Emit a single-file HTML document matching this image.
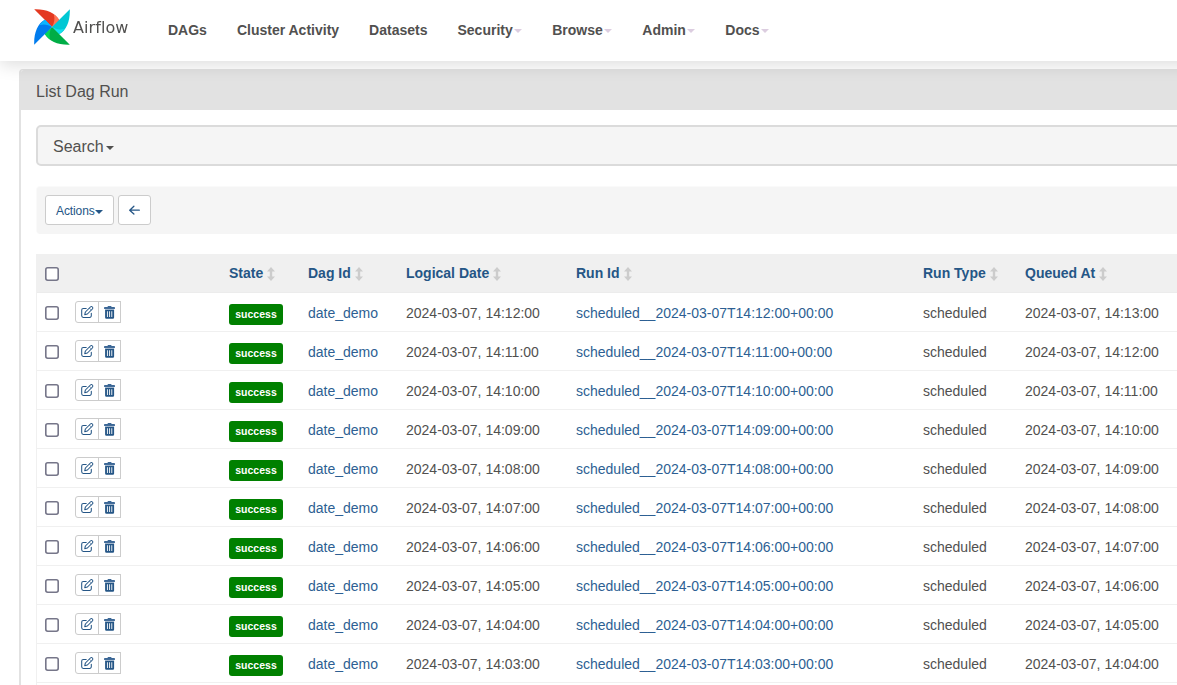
<!DOCTYPE html>
<html lang="en">
<head>
<meta charset="utf-8">
<title>List Dag Run - Airflow</title>
<style>
*{box-sizing:border-box}
html,body{margin:0;padding:0}
body{font-family:"Liberation Sans",Arial,sans-serif;font-size:14px;line-height:20px;color:#51504f;background:#fff;width:1177px;height:685px;overflow:hidden;position:relative}
a{color:#337ab7;text-decoration:none}
.navbar{position:absolute;left:0;top:0;width:1500px;height:61px;background:#fff;box-shadow:0 4px 16px rgba(0,0,0,.135);z-index:10}
.brand{position:absolute;left:34px;top:9px;width:100px;height:36px}
.brand svg{position:absolute;left:0;top:0}
.brand span{position:absolute;left:38.7px;top:7px;letter-spacing:.08px;font-family:"DejaVu Sans","Liberation Sans",sans-serif;font-weight:normal;font-size:16px;line-height:24px;color:#51504f;will-change:transform}
.nav{position:absolute;left:153px;top:0;margin:0;padding:0;list-style:none;display:flex;height:60px}
.nav li{padding:20px 15px;font-weight:bold;font-size:14px;line-height:20px;color:#51504f;white-space:nowrap}
.caret{display:inline-block;width:0;height:0;margin-left:2px;vertical-align:middle;border-top:4px solid;border-right:4px solid transparent;border-left:4px solid transparent}
.nav .caret{color:#dccde0;margin-left:1.5px}
.panel{position:absolute;left:19px;top:69px;width:1401px;height:700px;border:1px solid #e2e2e2;border-left-width:2px;border-radius:4px;background:#fff}
.panel-heading{height:40px;background:#e2e2e2;padding:12px 15px 8px;border-radius:3px 3px 0 0}
.panel-title{margin:0;font-size:16px;font-weight:normal;line-height:20px;color:#51504f}
.search{position:absolute;left:15px;top:55px;width:1368px;height:41px;background:#f5f5f5;border:2px solid #dbdbdb;border-radius:5px;padding:10px 15px;font-size:16px;line-height:20px;color:#51504f}
.well{position:absolute;left:15px;top:116px;width:1368px;height:48px;background:#f5f5f5;border:1px solid #fafafa;border-bottom:0;border-radius:4px}
.btn{position:absolute;top:8px;height:30px;border:1px solid #ccc;border-radius:3px;background:#fff;color:#255686;font-size:12px;line-height:18px;padding:6px 10px 4px;letter-spacing:-.1px}
table{position:absolute;left:15px;top:184px;width:1368px;border-collapse:separate;border-spacing:0;font-size:14px;table-layout:fixed;border-left:1px solid #f0f0f0}
tr{height:39px}
th{background:#f0f0f0;text-align:left;padding:0 8px 0 7px;font-weight:bold;color:#255686;white-space:nowrap;vertical-align:middle;border-bottom:1px solid #ececec}
td{padding:2px 8px 0 7px;border-bottom:1px solid #f0f0f0;white-space:nowrap;vertical-align:middle;color:#51504f}
th:first-child,td:first-child{padding-left:8px}
td a{color:#2d5f93}
.cb{display:block;width:14px;height:14px;position:relative;left:0;top:0}
.cb svg{display:block}
.state{display:inline-block;background:#008000;color:#fff;font-size:10.5px;font-weight:bold;line-height:14px;height:21px;width:54px;text-align:center;padding:3px 0 4px;border-radius:3px;position:relative;top:1px}
.bg{display:flex;height:22px;position:relative;top:-1px}
.bg span{display:block;width:24px;height:22px;border:1px solid #ccc;background:#fff;position:relative}
.bg span:first-child{border-radius:3px 0 0 3px}
.bg span+span{margin-left:-1px;width:23px}
.sort{display:inline-block;vertical-align:middle;margin-left:4px;position:relative;top:0}
.sort svg{display:block}
</style>
</head>
<body>
<div class="navbar">
  <div class="brand">
    <svg width="36" height="36" viewBox="-18 -18 36 36"><g transform="rotate(0)"><path d="M-17.8-17.8C-6-18.2 3-14.4 6.9-7.6Q7.5-6.9 6.8-6.5L0 0Z" fill="#e43921"/><path d="M1.8-12.4C3.4-11.1 5.6-9.2 6.9-7.6Q7.5-6.9 6.8-6.5L0 0C2.2-3.6 3.2-8 1.8-12.4Z" fill="#ff7557"/></g><g transform="rotate(90)"><path d="M-17.8-17.8C-6-18.2 3-14.4 6.9-7.6Q7.5-6.9 6.8-6.5L0 0Z" fill="#00c7d4"/><path d="M1.8-12.4C3.4-11.1 5.6-9.2 6.9-7.6Q7.5-6.9 6.8-6.5L0 0C2.2-3.6 3.2-8 1.8-12.4Z" fill="#11e1ee"/></g><g transform="rotate(180)"><path d="M-17.8-17.8C-6-18.2 3-14.4 6.9-7.6Q7.5-6.9 6.8-6.5L0 0Z" fill="#00ad46"/><path d="M1.8-12.4C3.4-11.1 5.6-9.2 6.9-7.6Q7.5-6.9 6.8-6.5L0 0C2.2-3.6 3.2-8 1.8-12.4Z" fill="#04d659"/></g><g transform="rotate(270)"><path d="M-17.8-17.8C-6-18.2 3-14.4 6.9-7.6Q7.5-6.9 6.8-6.5L0 0Z" fill="#017cee"/><path d="M1.8-12.4C3.4-11.1 5.6-9.2 6.9-7.6Q7.5-6.9 6.8-6.5L0 0C2.2-3.6 3.2-8 1.8-12.4Z" fill="#0cb6ff"/></g></svg>
    <span>Airflow</span>
  </div>
  <ul class="nav">
    <li>DAGs</li>
    <li>Cluster Activity</li>
    <li>Datasets</li>
    <li>Security<b class="caret"></b></li>
    <li>Browse<b class="caret"></b></li>
    <li>Admin<b class="caret"></b></li>
    <li>Docs<b class="caret"></b></li>
  </ul>
</div>
<div class="panel">
  <div class="panel-heading"><h4 class="panel-title">List Dag Run</h4></div>
  <div class="search">Search<b class="caret"></b></div>
  <div class="well">
    <div class="btn" style="left:8px;width:69px">Actions<b class="caret" style="margin-left:0"></b></div>
    <div class="btn" style="left:81px;width:33px"><svg width="33" height="30" viewBox="0 0 33 30" style="position:absolute;left:-1px;top:-1px"><path d="M21.3 15.2H11.8M15.9 11.3L11.7 15.2L15.9 19.1" fill="none" stroke="#255686" stroke-width="1.3" stroke-linecap="round" stroke-linejoin="round"/></svg></div>
  </div>
  <table id="t">
    <thead><tr>
      <th style="width:31px"><i class="cb" style="top:1px"><svg width="14" height="14" viewBox="0 0 14 14"><rect x=".8" y=".8" width="12.4" height="12.4" rx="1.9" fill="#fff" stroke="#767689" stroke-width="1.6"/></svg></i></th>
      <th style="width:154px"></th>
      <th style="width:79px">State<i class="sort"><svg width="8" height="14" viewBox="0 0 8 14"><path d="M4 0L8 4.5H5.2V9.5H8L4 14L0 9.5H2.8V4.5H0Z" fill="#ccc"/></svg></i></th>
      <th style="width:98px">Dag Id<i class="sort"><svg width="8" height="14" viewBox="0 0 8 14"><path d="M4 0L8 4.5H5.2V9.5H8L4 14L0 9.5H2.8V4.5H0Z" fill="#ccc"/></svg></i></th>
      <th style="width:170px">Logical Date<i class="sort"><svg width="8" height="14" viewBox="0 0 8 14"><path d="M4 0L8 4.5H5.2V9.5H8L4 14L0 9.5H2.8V4.5H0Z" fill="#ccc"/></svg></i></th>
      <th style="width:347px">Run Id<i class="sort"><svg width="8" height="14" viewBox="0 0 8 14"><path d="M4 0L8 4.5H5.2V9.5H8L4 14L0 9.5H2.8V4.5H0Z" fill="#ccc"/></svg></i></th>
      <th style="width:102px">Run Type<i class="sort"><svg width="8" height="14" viewBox="0 0 8 14"><path d="M4 0L8 4.5H5.2V9.5H8L4 14L0 9.5H2.8V4.5H0Z" fill="#ccc"/></svg></i></th>
      <th>Queued At<i class="sort"><svg width="8" height="14" viewBox="0 0 8 14"><path d="M4 0L8 4.5H5.2V9.5H8L4 14L0 9.5H2.8V4.5H0Z" fill="#ccc"/></svg></i></th>
    </tr></thead>
    <tbody>
      <tr>
        <td><i class="cb"><svg width="14" height="14" viewBox="0 0 14 14"><rect x=".8" y=".8" width="12.4" height="12.4" rx="1.9" fill="#fff" stroke="#767689" stroke-width="1.6"/></svg></i></td>
        <td><div class="bg"><span><svg width="24" height="22" viewBox="0 0 24 22" style="position:absolute;left:-1px;top:-1px"><g fill="none" stroke="#255686" stroke-width="1.05" stroke-linecap="round" stroke-linejoin="round"><path d="M11.2 7.4H8.3a1.6 1.6 0 0 0-1.6 1.6V14.8a1.6 1.6 0 0 0 1.6 1.6H14.7a1.6 1.6 0 0 0 1.6-1.6V12.2"/><path d="M9.75 13.65L10.4 11L15.4 6A1.4 1.4 0 0 1 17.4 8L12.4 13Z" stroke-width="1.05"/><path d="M14.5 7.3L16.1 8.9" stroke-width=".6"/></g></svg></span><span><svg width="23" height="22" viewBox="0 0 23 22" style="position:absolute;left:-1px;top:-1px"><path d="M9.6 6V5.6Q9.6 5 10.2 5H12.9Q13.5 5 13.5 5.6V6ZM6.1 6.4Q6.1 5.9 6.6 5.9H16.4Q16.9 5.9 16.9 6.4V7.9H6.1Z" fill="#3b6796"/><path d="M7.1 8.7H16.1V16.5Q16.1 17.7 14.9 17.7H8.3Q7.1 17.7 7.1 16.5ZM8.95 10.2V15.9H9.85V10.2ZM11.15 10.2V15.9H12.05V10.2ZM13.35 10.2V15.9H14.25V10.2Z" fill="#255686" fill-rule="evenodd"/><rect x="7.1" y="7.9" width="9" height=".8" fill="#8fa9c4"/></svg></span></div></td>
        <td><span class="state">success</span></td>
        <td><a>date_demo</a></td>
        <td>2024-03-07, 14:12:00</td>
        <td><a>scheduled__2024-03-07T14:12:00+00:00</a></td>
        <td>scheduled</td>
        <td>2024-03-07, 14:13:00</td>
      </tr>
      <tr>
        <td><i class="cb"><svg width="14" height="14" viewBox="0 0 14 14"><rect x=".8" y=".8" width="12.4" height="12.4" rx="1.9" fill="#fff" stroke="#767689" stroke-width="1.6"/></svg></i></td>
        <td><div class="bg"><span><svg width="24" height="22" viewBox="0 0 24 22" style="position:absolute;left:-1px;top:-1px"><g fill="none" stroke="#255686" stroke-width="1.05" stroke-linecap="round" stroke-linejoin="round"><path d="M11.2 7.4H8.3a1.6 1.6 0 0 0-1.6 1.6V14.8a1.6 1.6 0 0 0 1.6 1.6H14.7a1.6 1.6 0 0 0 1.6-1.6V12.2"/><path d="M9.75 13.65L10.4 11L15.4 6A1.4 1.4 0 0 1 17.4 8L12.4 13Z" stroke-width="1.05"/><path d="M14.5 7.3L16.1 8.9" stroke-width=".6"/></g></svg></span><span><svg width="23" height="22" viewBox="0 0 23 22" style="position:absolute;left:-1px;top:-1px"><path d="M9.6 6V5.6Q9.6 5 10.2 5H12.9Q13.5 5 13.5 5.6V6ZM6.1 6.4Q6.1 5.9 6.6 5.9H16.4Q16.9 5.9 16.9 6.4V7.9H6.1Z" fill="#3b6796"/><path d="M7.1 8.7H16.1V16.5Q16.1 17.7 14.9 17.7H8.3Q7.1 17.7 7.1 16.5ZM8.95 10.2V15.9H9.85V10.2ZM11.15 10.2V15.9H12.05V10.2ZM13.35 10.2V15.9H14.25V10.2Z" fill="#255686" fill-rule="evenodd"/><rect x="7.1" y="7.9" width="9" height=".8" fill="#8fa9c4"/></svg></span></div></td>
        <td><span class="state">success</span></td>
        <td><a>date_demo</a></td>
        <td>2024-03-07, 14:11:00</td>
        <td><a>scheduled__2024-03-07T14:11:00+00:00</a></td>
        <td>scheduled</td>
        <td>2024-03-07, 14:12:00</td>
      </tr>
      <tr>
        <td><i class="cb"><svg width="14" height="14" viewBox="0 0 14 14"><rect x=".8" y=".8" width="12.4" height="12.4" rx="1.9" fill="#fff" stroke="#767689" stroke-width="1.6"/></svg></i></td>
        <td><div class="bg"><span><svg width="24" height="22" viewBox="0 0 24 22" style="position:absolute;left:-1px;top:-1px"><g fill="none" stroke="#255686" stroke-width="1.05" stroke-linecap="round" stroke-linejoin="round"><path d="M11.2 7.4H8.3a1.6 1.6 0 0 0-1.6 1.6V14.8a1.6 1.6 0 0 0 1.6 1.6H14.7a1.6 1.6 0 0 0 1.6-1.6V12.2"/><path d="M9.75 13.65L10.4 11L15.4 6A1.4 1.4 0 0 1 17.4 8L12.4 13Z" stroke-width="1.05"/><path d="M14.5 7.3L16.1 8.9" stroke-width=".6"/></g></svg></span><span><svg width="23" height="22" viewBox="0 0 23 22" style="position:absolute;left:-1px;top:-1px"><path d="M9.6 6V5.6Q9.6 5 10.2 5H12.9Q13.5 5 13.5 5.6V6ZM6.1 6.4Q6.1 5.9 6.6 5.9H16.4Q16.9 5.9 16.9 6.4V7.9H6.1Z" fill="#3b6796"/><path d="M7.1 8.7H16.1V16.5Q16.1 17.7 14.9 17.7H8.3Q7.1 17.7 7.1 16.5ZM8.95 10.2V15.9H9.85V10.2ZM11.15 10.2V15.9H12.05V10.2ZM13.35 10.2V15.9H14.25V10.2Z" fill="#255686" fill-rule="evenodd"/><rect x="7.1" y="7.9" width="9" height=".8" fill="#8fa9c4"/></svg></span></div></td>
        <td><span class="state">success</span></td>
        <td><a>date_demo</a></td>
        <td>2024-03-07, 14:10:00</td>
        <td><a>scheduled__2024-03-07T14:10:00+00:00</a></td>
        <td>scheduled</td>
        <td>2024-03-07, 14:11:00</td>
      </tr>
      <tr>
        <td><i class="cb"><svg width="14" height="14" viewBox="0 0 14 14"><rect x=".8" y=".8" width="12.4" height="12.4" rx="1.9" fill="#fff" stroke="#767689" stroke-width="1.6"/></svg></i></td>
        <td><div class="bg"><span><svg width="24" height="22" viewBox="0 0 24 22" style="position:absolute;left:-1px;top:-1px"><g fill="none" stroke="#255686" stroke-width="1.05" stroke-linecap="round" stroke-linejoin="round"><path d="M11.2 7.4H8.3a1.6 1.6 0 0 0-1.6 1.6V14.8a1.6 1.6 0 0 0 1.6 1.6H14.7a1.6 1.6 0 0 0 1.6-1.6V12.2"/><path d="M9.75 13.65L10.4 11L15.4 6A1.4 1.4 0 0 1 17.4 8L12.4 13Z" stroke-width="1.05"/><path d="M14.5 7.3L16.1 8.9" stroke-width=".6"/></g></svg></span><span><svg width="23" height="22" viewBox="0 0 23 22" style="position:absolute;left:-1px;top:-1px"><path d="M9.6 6V5.6Q9.6 5 10.2 5H12.9Q13.5 5 13.5 5.6V6ZM6.1 6.4Q6.1 5.9 6.6 5.9H16.4Q16.9 5.9 16.9 6.4V7.9H6.1Z" fill="#3b6796"/><path d="M7.1 8.7H16.1V16.5Q16.1 17.7 14.9 17.7H8.3Q7.1 17.7 7.1 16.5ZM8.95 10.2V15.9H9.85V10.2ZM11.15 10.2V15.9H12.05V10.2ZM13.35 10.2V15.9H14.25V10.2Z" fill="#255686" fill-rule="evenodd"/><rect x="7.1" y="7.9" width="9" height=".8" fill="#8fa9c4"/></svg></span></div></td>
        <td><span class="state">success</span></td>
        <td><a>date_demo</a></td>
        <td>2024-03-07, 14:09:00</td>
        <td><a>scheduled__2024-03-07T14:09:00+00:00</a></td>
        <td>scheduled</td>
        <td>2024-03-07, 14:10:00</td>
      </tr>
      <tr>
        <td><i class="cb"><svg width="14" height="14" viewBox="0 0 14 14"><rect x=".8" y=".8" width="12.4" height="12.4" rx="1.9" fill="#fff" stroke="#767689" stroke-width="1.6"/></svg></i></td>
        <td><div class="bg"><span><svg width="24" height="22" viewBox="0 0 24 22" style="position:absolute;left:-1px;top:-1px"><g fill="none" stroke="#255686" stroke-width="1.05" stroke-linecap="round" stroke-linejoin="round"><path d="M11.2 7.4H8.3a1.6 1.6 0 0 0-1.6 1.6V14.8a1.6 1.6 0 0 0 1.6 1.6H14.7a1.6 1.6 0 0 0 1.6-1.6V12.2"/><path d="M9.75 13.65L10.4 11L15.4 6A1.4 1.4 0 0 1 17.4 8L12.4 13Z" stroke-width="1.05"/><path d="M14.5 7.3L16.1 8.9" stroke-width=".6"/></g></svg></span><span><svg width="23" height="22" viewBox="0 0 23 22" style="position:absolute;left:-1px;top:-1px"><path d="M9.6 6V5.6Q9.6 5 10.2 5H12.9Q13.5 5 13.5 5.6V6ZM6.1 6.4Q6.1 5.9 6.6 5.9H16.4Q16.9 5.9 16.9 6.4V7.9H6.1Z" fill="#3b6796"/><path d="M7.1 8.7H16.1V16.5Q16.1 17.7 14.9 17.7H8.3Q7.1 17.7 7.1 16.5ZM8.95 10.2V15.9H9.85V10.2ZM11.15 10.2V15.9H12.05V10.2ZM13.35 10.2V15.9H14.25V10.2Z" fill="#255686" fill-rule="evenodd"/><rect x="7.1" y="7.9" width="9" height=".8" fill="#8fa9c4"/></svg></span></div></td>
        <td><span class="state">success</span></td>
        <td><a>date_demo</a></td>
        <td>2024-03-07, 14:08:00</td>
        <td><a>scheduled__2024-03-07T14:08:00+00:00</a></td>
        <td>scheduled</td>
        <td>2024-03-07, 14:09:00</td>
      </tr>
      <tr>
        <td><i class="cb"><svg width="14" height="14" viewBox="0 0 14 14"><rect x=".8" y=".8" width="12.4" height="12.4" rx="1.9" fill="#fff" stroke="#767689" stroke-width="1.6"/></svg></i></td>
        <td><div class="bg"><span><svg width="24" height="22" viewBox="0 0 24 22" style="position:absolute;left:-1px;top:-1px"><g fill="none" stroke="#255686" stroke-width="1.05" stroke-linecap="round" stroke-linejoin="round"><path d="M11.2 7.4H8.3a1.6 1.6 0 0 0-1.6 1.6V14.8a1.6 1.6 0 0 0 1.6 1.6H14.7a1.6 1.6 0 0 0 1.6-1.6V12.2"/><path d="M9.75 13.65L10.4 11L15.4 6A1.4 1.4 0 0 1 17.4 8L12.4 13Z" stroke-width="1.05"/><path d="M14.5 7.3L16.1 8.9" stroke-width=".6"/></g></svg></span><span><svg width="23" height="22" viewBox="0 0 23 22" style="position:absolute;left:-1px;top:-1px"><path d="M9.6 6V5.6Q9.6 5 10.2 5H12.9Q13.5 5 13.5 5.6V6ZM6.1 6.4Q6.1 5.9 6.6 5.9H16.4Q16.9 5.9 16.9 6.4V7.9H6.1Z" fill="#3b6796"/><path d="M7.1 8.7H16.1V16.5Q16.1 17.7 14.9 17.7H8.3Q7.1 17.7 7.1 16.5ZM8.95 10.2V15.9H9.85V10.2ZM11.15 10.2V15.9H12.05V10.2ZM13.35 10.2V15.9H14.25V10.2Z" fill="#255686" fill-rule="evenodd"/><rect x="7.1" y="7.9" width="9" height=".8" fill="#8fa9c4"/></svg></span></div></td>
        <td><span class="state">success</span></td>
        <td><a>date_demo</a></td>
        <td>2024-03-07, 14:07:00</td>
        <td><a>scheduled__2024-03-07T14:07:00+00:00</a></td>
        <td>scheduled</td>
        <td>2024-03-07, 14:08:00</td>
      </tr>
      <tr>
        <td><i class="cb"><svg width="14" height="14" viewBox="0 0 14 14"><rect x=".8" y=".8" width="12.4" height="12.4" rx="1.9" fill="#fff" stroke="#767689" stroke-width="1.6"/></svg></i></td>
        <td><div class="bg"><span><svg width="24" height="22" viewBox="0 0 24 22" style="position:absolute;left:-1px;top:-1px"><g fill="none" stroke="#255686" stroke-width="1.05" stroke-linecap="round" stroke-linejoin="round"><path d="M11.2 7.4H8.3a1.6 1.6 0 0 0-1.6 1.6V14.8a1.6 1.6 0 0 0 1.6 1.6H14.7a1.6 1.6 0 0 0 1.6-1.6V12.2"/><path d="M9.75 13.65L10.4 11L15.4 6A1.4 1.4 0 0 1 17.4 8L12.4 13Z" stroke-width="1.05"/><path d="M14.5 7.3L16.1 8.9" stroke-width=".6"/></g></svg></span><span><svg width="23" height="22" viewBox="0 0 23 22" style="position:absolute;left:-1px;top:-1px"><path d="M9.6 6V5.6Q9.6 5 10.2 5H12.9Q13.5 5 13.5 5.6V6ZM6.1 6.4Q6.1 5.9 6.6 5.9H16.4Q16.9 5.9 16.9 6.4V7.9H6.1Z" fill="#3b6796"/><path d="M7.1 8.7H16.1V16.5Q16.1 17.7 14.9 17.7H8.3Q7.1 17.7 7.1 16.5ZM8.95 10.2V15.9H9.85V10.2ZM11.15 10.2V15.9H12.05V10.2ZM13.35 10.2V15.9H14.25V10.2Z" fill="#255686" fill-rule="evenodd"/><rect x="7.1" y="7.9" width="9" height=".8" fill="#8fa9c4"/></svg></span></div></td>
        <td><span class="state">success</span></td>
        <td><a>date_demo</a></td>
        <td>2024-03-07, 14:06:00</td>
        <td><a>scheduled__2024-03-07T14:06:00+00:00</a></td>
        <td>scheduled</td>
        <td>2024-03-07, 14:07:00</td>
      </tr>
      <tr>
        <td><i class="cb"><svg width="14" height="14" viewBox="0 0 14 14"><rect x=".8" y=".8" width="12.4" height="12.4" rx="1.9" fill="#fff" stroke="#767689" stroke-width="1.6"/></svg></i></td>
        <td><div class="bg"><span><svg width="24" height="22" viewBox="0 0 24 22" style="position:absolute;left:-1px;top:-1px"><g fill="none" stroke="#255686" stroke-width="1.05" stroke-linecap="round" stroke-linejoin="round"><path d="M11.2 7.4H8.3a1.6 1.6 0 0 0-1.6 1.6V14.8a1.6 1.6 0 0 0 1.6 1.6H14.7a1.6 1.6 0 0 0 1.6-1.6V12.2"/><path d="M9.75 13.65L10.4 11L15.4 6A1.4 1.4 0 0 1 17.4 8L12.4 13Z" stroke-width="1.05"/><path d="M14.5 7.3L16.1 8.9" stroke-width=".6"/></g></svg></span><span><svg width="23" height="22" viewBox="0 0 23 22" style="position:absolute;left:-1px;top:-1px"><path d="M9.6 6V5.6Q9.6 5 10.2 5H12.9Q13.5 5 13.5 5.6V6ZM6.1 6.4Q6.1 5.9 6.6 5.9H16.4Q16.9 5.9 16.9 6.4V7.9H6.1Z" fill="#3b6796"/><path d="M7.1 8.7H16.1V16.5Q16.1 17.7 14.9 17.7H8.3Q7.1 17.7 7.1 16.5ZM8.95 10.2V15.9H9.85V10.2ZM11.15 10.2V15.9H12.05V10.2ZM13.35 10.2V15.9H14.25V10.2Z" fill="#255686" fill-rule="evenodd"/><rect x="7.1" y="7.9" width="9" height=".8" fill="#8fa9c4"/></svg></span></div></td>
        <td><span class="state">success</span></td>
        <td><a>date_demo</a></td>
        <td>2024-03-07, 14:05:00</td>
        <td><a>scheduled__2024-03-07T14:05:00+00:00</a></td>
        <td>scheduled</td>
        <td>2024-03-07, 14:06:00</td>
      </tr>
      <tr>
        <td><i class="cb"><svg width="14" height="14" viewBox="0 0 14 14"><rect x=".8" y=".8" width="12.4" height="12.4" rx="1.9" fill="#fff" stroke="#767689" stroke-width="1.6"/></svg></i></td>
        <td><div class="bg"><span><svg width="24" height="22" viewBox="0 0 24 22" style="position:absolute;left:-1px;top:-1px"><g fill="none" stroke="#255686" stroke-width="1.05" stroke-linecap="round" stroke-linejoin="round"><path d="M11.2 7.4H8.3a1.6 1.6 0 0 0-1.6 1.6V14.8a1.6 1.6 0 0 0 1.6 1.6H14.7a1.6 1.6 0 0 0 1.6-1.6V12.2"/><path d="M9.75 13.65L10.4 11L15.4 6A1.4 1.4 0 0 1 17.4 8L12.4 13Z" stroke-width="1.05"/><path d="M14.5 7.3L16.1 8.9" stroke-width=".6"/></g></svg></span><span><svg width="23" height="22" viewBox="0 0 23 22" style="position:absolute;left:-1px;top:-1px"><path d="M9.6 6V5.6Q9.6 5 10.2 5H12.9Q13.5 5 13.5 5.6V6ZM6.1 6.4Q6.1 5.9 6.6 5.9H16.4Q16.9 5.9 16.9 6.4V7.9H6.1Z" fill="#3b6796"/><path d="M7.1 8.7H16.1V16.5Q16.1 17.7 14.9 17.7H8.3Q7.1 17.7 7.1 16.5ZM8.95 10.2V15.9H9.85V10.2ZM11.15 10.2V15.9H12.05V10.2ZM13.35 10.2V15.9H14.25V10.2Z" fill="#255686" fill-rule="evenodd"/><rect x="7.1" y="7.9" width="9" height=".8" fill="#8fa9c4"/></svg></span></div></td>
        <td><span class="state">success</span></td>
        <td><a>date_demo</a></td>
        <td>2024-03-07, 14:04:00</td>
        <td><a>scheduled__2024-03-07T14:04:00+00:00</a></td>
        <td>scheduled</td>
        <td>2024-03-07, 14:05:00</td>
      </tr>
      <tr>
        <td><i class="cb"><svg width="14" height="14" viewBox="0 0 14 14"><rect x=".8" y=".8" width="12.4" height="12.4" rx="1.9" fill="#fff" stroke="#767689" stroke-width="1.6"/></svg></i></td>
        <td><div class="bg"><span><svg width="24" height="22" viewBox="0 0 24 22" style="position:absolute;left:-1px;top:-1px"><g fill="none" stroke="#255686" stroke-width="1.05" stroke-linecap="round" stroke-linejoin="round"><path d="M11.2 7.4H8.3a1.6 1.6 0 0 0-1.6 1.6V14.8a1.6 1.6 0 0 0 1.6 1.6H14.7a1.6 1.6 0 0 0 1.6-1.6V12.2"/><path d="M9.75 13.65L10.4 11L15.4 6A1.4 1.4 0 0 1 17.4 8L12.4 13Z" stroke-width="1.05"/><path d="M14.5 7.3L16.1 8.9" stroke-width=".6"/></g></svg></span><span><svg width="23" height="22" viewBox="0 0 23 22" style="position:absolute;left:-1px;top:-1px"><path d="M9.6 6V5.6Q9.6 5 10.2 5H12.9Q13.5 5 13.5 5.6V6ZM6.1 6.4Q6.1 5.9 6.6 5.9H16.4Q16.9 5.9 16.9 6.4V7.9H6.1Z" fill="#3b6796"/><path d="M7.1 8.7H16.1V16.5Q16.1 17.7 14.9 17.7H8.3Q7.1 17.7 7.1 16.5ZM8.95 10.2V15.9H9.85V10.2ZM11.15 10.2V15.9H12.05V10.2ZM13.35 10.2V15.9H14.25V10.2Z" fill="#255686" fill-rule="evenodd"/><rect x="7.1" y="7.9" width="9" height=".8" fill="#8fa9c4"/></svg></span></div></td>
        <td><span class="state">success</span></td>
        <td><a>date_demo</a></td>
        <td>2024-03-07, 14:03:00</td>
        <td><a>scheduled__2024-03-07T14:03:00+00:00</a></td>
        <td>scheduled</td>
        <td>2024-03-07, 14:04:00</td>
      </tr>
      <tr>
        <td><i class="cb"><svg width="14" height="14" viewBox="0 0 14 14"><rect x=".8" y=".8" width="12.4" height="12.4" rx="1.9" fill="#fff" stroke="#767689" stroke-width="1.6"/></svg></i></td>
        <td><div class="bg"><span><svg width="24" height="22" viewBox="0 0 24 22" style="position:absolute;left:-1px;top:-1px"><g fill="none" stroke="#255686" stroke-width="1.05" stroke-linecap="round" stroke-linejoin="round"><path d="M11.2 7.4H8.3a1.6 1.6 0 0 0-1.6 1.6V14.8a1.6 1.6 0 0 0 1.6 1.6H14.7a1.6 1.6 0 0 0 1.6-1.6V12.2"/><path d="M9.75 13.65L10.4 11L15.4 6A1.4 1.4 0 0 1 17.4 8L12.4 13Z" stroke-width="1.05"/><path d="M14.5 7.3L16.1 8.9" stroke-width=".6"/></g></svg></span><span><svg width="23" height="22" viewBox="0 0 23 22" style="position:absolute;left:-1px;top:-1px"><path d="M9.6 6V5.6Q9.6 5 10.2 5H12.9Q13.5 5 13.5 5.6V6ZM6.1 6.4Q6.1 5.9 6.6 5.9H16.4Q16.9 5.9 16.9 6.4V7.9H6.1Z" fill="#3b6796"/><path d="M7.1 8.7H16.1V16.5Q16.1 17.7 14.9 17.7H8.3Q7.1 17.7 7.1 16.5ZM8.95 10.2V15.9H9.85V10.2ZM11.15 10.2V15.9H12.05V10.2ZM13.35 10.2V15.9H14.25V10.2Z" fill="#255686" fill-rule="evenodd"/><rect x="7.1" y="7.9" width="9" height=".8" fill="#8fa9c4"/></svg></span></div></td>
        <td><span class="state">success</span></td>
        <td><a>date_demo</a></td>
        <td>2024-03-07, 14:02:00</td>
        <td><a>scheduled__2024-03-07T14:02:00+00:00</a></td>
        <td>scheduled</td>
        <td>2024-03-07, 14:03:00</td>
      </tr>
    </tbody>
  </table>
</div>
</body>
</html>
